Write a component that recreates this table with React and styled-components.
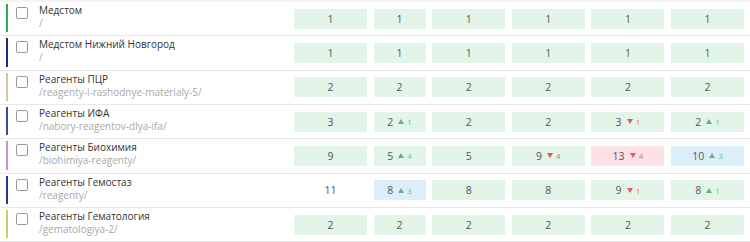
import React from "react";
import styled, { createGlobalStyle } from "styled-components";

const Global = createGlobalStyle`
  html, body { margin: 0; padding: 0; background: #fff; }
  body { font-family: "Open Sans", "Noto Sans", sans-serif; }
`;

const Table = styled.div`
  width: 750px;
  border-top: 2px solid #f4f4f4;
`;

const Row = styled.div`
  display: grid;
  grid-template-columns: 1fr 73px 52px 73px 73px 73px 73px;
  column-gap: 6.6px;
  padding-right: 6px;
  height: 33.34px;
  align-items: center;
  border-bottom: 1px solid #e8e8e8;
`;

const NameCell = styled.div`
  display: flex;
  align-items: stretch;
  height: 100%;
`;

const Bar = styled.div`
  width: 2px;
  margin: 2px 0 3px 6px;
  background: ${(p) => p.$color};
`;

const Check = styled.div`
  width: 10px;
  height: 10px;
  border: 1px solid #9a9a9a;
  border-radius: 2px;
  margin: 5px 0 0 8px;
  background: #fff;
`;

const Texts = styled.div`
  display: flex;
  flex-direction: column;
  justify-content: center;
  margin-left: 11px;
  padding-bottom: 3px;
`;

const Title = styled.div`
  font-size: 10px;
  line-height: 13px;
  color: #333;
`;

const Path = styled.div`
  font-size: 10px;
  line-height: 13px;
  color: #a8a8a8;
`;

const bgs = {
  green: "#e3f5e8",
  blue: "#ddeefb",
  red: "#fde0e3",
  none: "transparent",
};

const Cell = styled.div`
  height: 20px;
  display: flex;
  align-items: center;
  justify-content: center;
  gap: 5px;
  background: ${(p) => bgs[p.$bg]};
  font-size: 10.5px;
  color: #555;
`;

const Delta = styled.span`
  display: inline-flex;
  align-items: center;
  gap: 3px;
  font-size: 8px;
  color: ${(p) => (p.$up ? "#6cbf84" : "#e07070")};
`;

const Tri = ({ up }) => (
  <svg width="6" height="5" viewBox="0 0 6 5">
    {up ? (
      <polygon points="3,0 6,5 0,5" fill="#5fb878" />
    ) : (
      <polygon points="0,0 6,0 3,5" fill="#e05a5a" />
    )}
  </svg>
);

const rows = [
  { color: "#2fa84f", title: "Медстом", path: "/", cells: [[1], [1], [1], [1], [1], [1]] },
  { color: "#1f2a7a", title: "Медстом Нижний Новгород", path: "/", cells: [[1], [1], [1], [1], [1], [1]] },
  { color: "#d6c7a0", title: "Реагенты ПЦР", path: "/reagenty-i-rashodnye-materialy-5/", cells: [[2], [2], [2], [2], [2], [2]] },
  { color: "#3e4c97", title: "Реагенты ИФА", path: "/nabory-reagentov-dlya-ifa/", cells: [[3], [2, 1], [2], [2], [3, -1], [2, 1]] },
  { color: "#c98fd8", title: "Реагенты Биохимия", path: "/biohimiya-reagenty/", cells: [[9], [5, 4], [5], [9, -4], [13, -4, "red"], [10, 3, "blue"]] },
  { color: "#27358f", title: "Реагенты Гемостаз", path: "/reagenty/", cells: [[11, 0, "none"], [8, 3, "blue"], [8], [8], [9, -1], [8, 1]] },
  { color: "#b3d668", title: "Реагенты Гематология", path: "/gematologiya-2/", cells: [[2], [2], [2], [2], [2], [2]] },
];

export default function App() {
  return (
    <>
      <Global />
      <Table>
        {rows.map((r) => (
          <Row key={r.title}>
            <NameCell>
              <Bar $color={r.color} />
              <Check />
              <Texts>
                <Title>{r.title}</Title>
                <Path>{r.path}</Path>
              </Texts>
            </NameCell>
            {r.cells.map(([v, d, bg], i) => (
              <Cell key={i} $bg={bg || "green"}>
                <span>{v}</span>
                {d ? (
                  <Delta $up={d > 0}>
                    <Tri up={d > 0} />
                    {Math.abs(d)}
                  </Delta>
                ) : null}
              </Cell>
            ))}
          </Row>
        ))}
      </Table>
    </>
  );
}
